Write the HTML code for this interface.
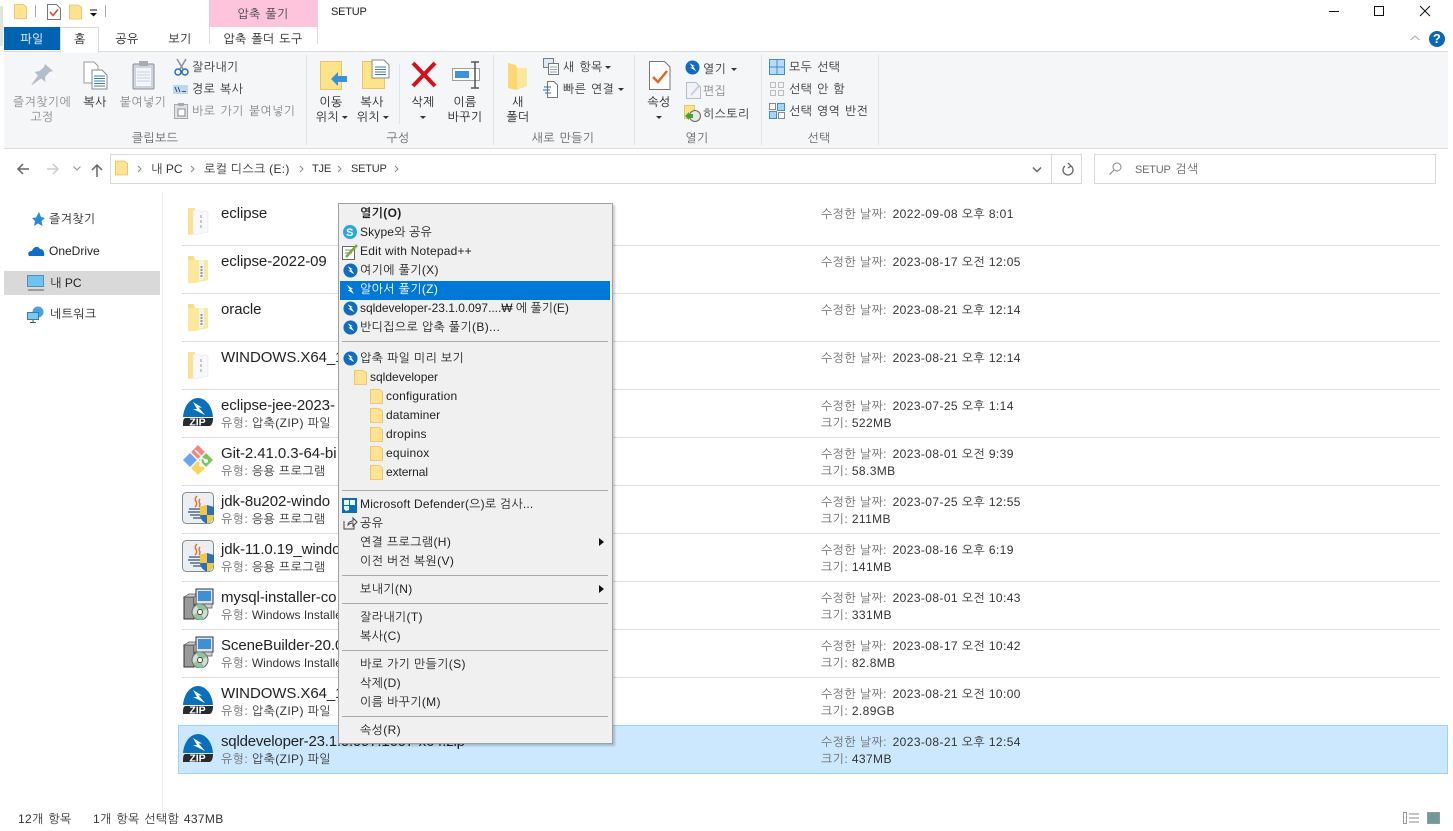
<!DOCTYPE html>
<html lang="ko"><head><meta charset="utf-8"><title>SETUP</title>
<style>
html,body{margin:0;padding:0;width:1453px;height:831px;overflow:hidden;background:#fff}
body{position:relative;font:12px/16px "Liberation Sans","NanumGothic","Noto Sans CJK KR",sans-serif;color:#222;letter-spacing:.35px;word-spacing:1px}
.t{position:absolute;white-space:nowrap;line-height:16px;margin-top:1px}
.c{transform:translateX(-50%);text-align:center}
.g{color:#8a8a8a}
.d{color:#666}
.r{position:absolute}
.n{font-size:15px;color:#222;letter-spacing:-.07px;word-spacing:0;margin-top:1px}
.s{color:#6d6d6d;letter-spacing:.4px;word-spacing:0;margin-top:0}
.s b{font-weight:normal;color:#333}
.q b{margin-left:2px}
.w b{letter-spacing:0}
.l{font-size:11px;letter-spacing:-.2px}
svg{position:absolute;overflow:visible}
.m{position:absolute;left:360px;white-space:nowrap;line-height:16px;color:#222;word-spacing:0}
.sep{position:absolute;left:342px;width:266px;height:1px;background:#a8a8a8}
.a{display:inline-block;width:0;height:0;border:3px solid transparent;border-top:3px solid #333;border-bottom:0;vertical-align:2px;margin-left:2px}
</style></head><body>
<svg width="0" height="0" style="position:absolute">
<defs>
<symbol id="f" viewBox="0 0 14 16"><path d="M.5.5H10L13.500 3V15.500H.5Z" fill="#ffe393" stroke="#e8c56a"/></symbol>
<symbol id="b" viewBox="0 0 16 16"><circle cx="8" cy="8" r="7.500" fill="#0f6cc0"/><path d="M5 3.500 10.500 6.500H8.500L12 12 5.500 8H8Z" fill="#fff"/></symbol>
<symbol id="zip" viewBox="0 0 30 31"><path d="M0 20C1 8 8 1 15 1S29 8 30 20Z" fill="#0b6fba"/><path d="M10 5 19 10.500H15.500L22 18 10 12H14Z" fill="#fff"/><path d="M2 21H30C30 25 29 29 26 29H0C0 25 0 22 2 21Z" fill="#2b2b2b"/><text x="14.500" y="28.500" font-family="Liberation Sans" font-weight="bold" font-size="10.500" letter-spacing="0" fill="#fff" text-anchor="middle">ZIP</text></symbol>
<symbol id="jv" viewBox="0 0 32 32"><rect x=".5" y=".5" width="31" height="31" rx="4" fill="#eceef2" stroke="#7f8a9a"/><path d="M15 4C10 9 18 10 13 15M18 7C15 10 20 11 17 15" fill="none" stroke="#e0762a" stroke-width="1.500"/><path d="M7 17H19M6 20H18M8 23H18M11 26H20" stroke="#4a6f90" stroke-width="1.500"/><path d="M18 15 25 13 32 15V23C32 28 27 31 25 32 23 31 18 28 18 23Z" fill="#2c6fc0"/><path d="M25 13V23H18V15ZM25 23H32C32 28 27 31 25 32Z" fill="#f8c933"/></symbol>
<symbol id="ms" viewBox="0 0 31 32"><rect x="1" y="9" width="10" height="22" fill="#9a9a9a" stroke="#333"/><path d="M1 9 6 6H15L11 9Z" fill="#ccc" stroke="#555" stroke-width=".7"/><rect x="13" y="1" width="17" height="15" fill="#dfe6ef" stroke="#333"/><rect x="15" y="3" width="13" height="10" fill="#3d8fd8"/><path d="M12 16H29V20H12Z" fill="#cfcfcf" stroke="#555" stroke-width=".7"/><circle cx="17" cy="24" r="8" fill="#cde0d0" stroke="#666"/><path d="M17 24 13 17A8 8 0 0 1 24 21ZM17 24 21 31A8 8 0 0 1 10 27Z" fill="#8fc49a"/><circle cx="17" cy="24" r="2.500" fill="#fff" stroke="#444"/></symbol>
<symbol id="fo" viewBox="0 0 22 29"><path d="M1 1 7 1 8 5H21V25L8 28H1Z" fill="#fbdc84"/><path d="M1 5H21V25L8 28H1Z" fill="#fde79b"/><path d="M12 5H17V24L12 26Z" fill="#f2f2ec"/><path d="M14.500 11V23" stroke="#7d9db8" stroke-width="2" stroke-dasharray="2 1"/></symbol>
<symbol id="fw" viewBox="0 0 22 29"><path d="M1 1 8 1V27L1 28Z" fill="#fde08a"/><path d="M6 3 21 5V25L6 28Z" fill="#f8f8f8" stroke="#e6e6e6" stroke-width=".6"/><path d="M14 8V22" stroke="#b4b8c4" stroke-width="1.500" stroke-dasharray="3 2"/></symbol>
</defs></svg>

<div class="r" style="left:0;top:6px;width:3px;height:40px;background:#dfe6dc"></div>

<!-- title bar -->
<svg style="left:14px;top:4px" width="13" height="15"><use href="#f" width="13" height="15"/></svg>
<div class="r" style="left:35px;top:5px;width:1px;height:12px;background:#aaa"></div>
<svg style="left:47px;top:4px" width="14" height="16"><path d="M.5.500H9.500L13.500 4.500V15.500H.5Z" fill="#fff" stroke="#777"/><path d="M3 8 6 11.500 11 5.500" fill="none" stroke="#d9472b" stroke-width="1.500"/></svg>
<svg style="left:69px;top:4px" width="13" height="16"><use href="#f" width="13" height="16"/></svg>
<svg style="left:90px;top:10px" width="8" height="7"><path d="M0 0H7" stroke="#111"/><path d="M0 3H7L3.500 6.500Z" fill="#111"/></svg>
<div class="r" style="left:105px;top:5px;width:1px;height:12px;background:#aaa"></div>
<div class="r" style="left:209px;top:0;width:109px;height:27px;background:#fdc4dc"></div>
<div class="t c d" style="left:263px;top:5px;color:#444">압축 풀기</div>
<div class="t l" style="left:331px;top:3px;color:#222">SETUP</div>
<svg style="left:1325px;top:4px" width="110" height="16"><path d="M4 7.500H14" stroke="#111"/><rect x="49.500" y="2.500" width="9" height="9" fill="none" stroke="#111"/><path d="M95 2 105 12M105 2 95 12" stroke="#111"/></svg>

<!-- tabs -->
<div class="r" style="left:4px;top:27px;width:56px;height:23px;background:#0063b1"></div>
<div class="t c" style="left:32px;top:30px;color:#fff">파일</div>
<div class="r" style="left:60px;top:27px;width:39px;height:25px;background:#fff;border:1px solid #dadbdc;border-bottom:none;box-sizing:border-box;z-index:2"></div>
<div class="t c" style="left:80px;top:30px;z-index:3">홈</div>
<div class="t c" style="left:127px;top:30px">공유</div>
<div class="t c" style="left:180px;top:30px">보기</div>
<div class="r" style="left:209px;top:27px;width:1px;height:17px;background:#dadbdc"></div>
<div class="r" style="left:317px;top:27px;width:1px;height:17px;background:#dadbdc"></div>
<div class="t c" style="left:263px;top:30px">압축 폴더 도구</div>
<svg style="left:1410px;top:35px" width="10" height="6"><path d="M.5 5 5 1 9.500 5" fill="none" stroke="#aaa"/></svg>
<div class="r" style="left:1429px;top:31px;width:16px;height:16px;border-radius:50%;background:#0a66b8"></div>
<div class="t c" style="left:1437px;top:30px;color:#fff;font-weight:bold;font-size:13px">?</div>

<!-- ribbon -->
<div class="r" style="left:4px;top:51px;width:1444px;height:98px;background:#f5f6f7;border-top:1px solid #dadbdc;border-bottom:1px solid #dadbdc;box-sizing:border-box"></div>
<div class="r" style="left:60px;top:50px;width:39px;height:3px;background:#fff;z-index:2;border-left:1px solid #dadbdc;border-right:1px solid #dadbdc;box-sizing:border-box"></div>
<div class="r" style="left:306px;top:55px;width:1px;height:90px;background:#e2e3e4"></div>
<div class="r" style="left:493px;top:55px;width:1px;height:90px;background:#e2e3e4"></div>
<div class="r" style="left:634px;top:55px;width:1px;height:90px;background:#e2e3e4"></div>
<div class="r" style="left:761px;top:55px;width:1px;height:90px;background:#e2e3e4"></div>
<div class="r" style="left:878px;top:55px;width:1px;height:90px;background:#e2e3e4"></div>
<div class="r" style="left:399px;top:64px;width:1px;height:60px;background:#e2e3e4"></div>

<!-- clipboard -->
<svg style="left:31px;top:64px" width="23" height="22"><path d="M14 0 22 7 18.500 8 14 13 14.500 18 10 14.500 1 21 .5 20.500 7 11.500 3.500 8 8.500 7 13 3Z" fill="#b4bdca"/></svg>
<div class="t c g" style="left:42px;top:93px">즐겨찾기에</div>
<div class="t c g" style="left:42px;top:108px">고정</div>
<svg style="left:83px;top:61px" width="25" height="29"><path d="M1 1H11L15 5V22H1Z" fill="#fff" stroke="#9a9a9a"/><path d="M9 9H19L24 14V28H9Z" fill="#fff" stroke="#8a8a8a"/><path d="M11 15H22M11 17.500H22M11 20H22M11 22.500H22M11 25H22" stroke="#3f78b8"/></svg>
<div class="t c" style="left:95px;top:93px">복사</div>
<svg style="left:132px;top:60px" width="23" height="30"><rect x="1" y="4" width="21" height="25" rx="1" fill="#cdd4df" stroke="#8a8f98"/><rect x="4" y="8" width="15" height="18" fill="#f2f5fa"/><rect x="7" y="1" width="9" height="5" fill="#a8acb2"/><path d="M5 12H18M5 15H18M5 18H18M5 21H18" stroke="#c6d1e4"/></svg>
<div class="t c g" style="left:143px;top:93px">붙여넣기</div>
<svg style="left:174px;top:58px" width="15" height="18"><path d="M3 1 9 11M12 1 6 11" stroke="#8a8f98" stroke-width="1.500"/><circle cx="4" cy="14" r="3" fill="none" stroke="#2b6fb5" stroke-width="1.500"/><circle cx="11" cy="14" r="3" fill="none" stroke="#2b6fb5" stroke-width="1.500"/></svg>
<div class="t" style="left:192px;top:58px;color:#333">잘라내기</div>
<svg style="left:173px;top:85px" width="15" height="9"><rect width="15" height="9" fill="#bcd8f0"/><path d="M2 2 4 7M5 2 7 7M9 6.500H13" stroke="#234" stroke-width=".8"/></svg>
<div class="t" style="left:192px;top:80px;color:#333">경로 복사</div>
<svg style="left:174px;top:103px" width="14" height="16"><rect x=".5" y="1.500" width="13" height="14" fill="#dfe3e8" stroke="#a5a9af"/><rect x="4" y="0" width="6" height="3" fill="#a5a9af"/><rect x="4" y="6" width="7" height="7" fill="#fff" stroke="#888"/></svg>
<div class="t g" style="left:192px;top:102px;word-spacing:1.500px">바로 가기 붙여넣기</div>
<div class="t c d" style="left:155px;top:129px">클립보드</div>

<!-- organize -->
<svg style="left:320px;top:61px" width="29" height="29"><rect x=".5" y=".5" width="21" height="28" fill="#fde38a" stroke="#e8c566"/><path d="M27 15H18V11L11 18 18 25V21H27Z" fill="#3c8fd9"/></svg>
<div class="t c" style="left:331px;top:93px">이동</div>
<div class="t c" style="left:332px;top:108px">위치<span class="a" style="margin-left:3px"></span></div>
<svg style="left:362px;top:59px" width="28" height="31"><rect x=".5" y="2.500" width="22" height="27" fill="#fde38a" stroke="#e8c566"/><path d="M10 1H22L27 6V19H10Z" fill="#fff" stroke="#8a8a8a"/><path d="M13 8H24M13 10.500H24M13 13H24M13 15.500H24" stroke="#3f78b8"/></svg>
<div class="t c" style="left:372px;top:93px">복사</div>
<div class="t c" style="left:373px;top:108px">위치<span class="a" style="margin-left:3px"></span></div>
<svg style="left:411px;top:61px" width="26" height="27"><path d="M2 2 24 25M24 2 2 25" stroke="#d5121b" stroke-width="4"/></svg>
<div class="t c" style="left:423px;top:93px">삭제</div>
<div class="t c" style="left:423px;top:108px"><span class="a" style="margin:0"></span></div>
<svg style="left:452px;top:61px" width="29" height="28"><rect x=".5" y="7.500" width="27" height="12" fill="#fff" stroke="#9a9fa6"/><rect x="3" y="10" width="14" height="7" fill="#3c93e0"/><path d="M19 1H27M23 1V27M19 27H27" stroke="#555" stroke-width="1.500" fill="none"/></svg>
<div class="t c" style="left:465px;top:93px">이름</div>
<div class="t c" style="left:465px;top:108px">바꾸기</div>
<div class="t c d" style="left:398px;top:129px">구성</div>

<!-- new -->
<svg style="left:507px;top:62px" width="21" height="28"><path d="M1 1 9 3 10 6H20V24L9 28 1 26Z" fill="#fbd872"/><path d="M10 6H20V24L10 27Z" fill="#fde79b"/></svg>
<div class="t c" style="left:518px;top:93px">새</div>
<div class="t c" style="left:518px;top:108px">폴더</div>
<svg style="left:543px;top:58px" width="16" height="17"><rect x=".5" y=".5" width="10" height="9" fill="#dfe9f2" stroke="#6d7e8e"/><rect x="5.500" y="5.500" width="10" height="11" fill="#fff" stroke="#777"/><path d="M7 9H14M7 11.500H14M7 14H14" stroke="#8aa"/></svg>
<div class="t" style="left:563px;top:58px;color:#333">새 항목<span class="a" style="margin-left:2px"></span></div>
<svg style="left:543px;top:81px" width="16" height="17"><path d="M4.500.5H11L14.500 4V16.500H4.500Z" fill="#fff" stroke="#777"/><path d="M1 6H8M0 9H7M2 12H8" stroke="#1f6fbf"/></svg>
<div class="t" style="left:563px;top:80px;color:#333">빠른 연결<span class="a" style="margin-left:4px"></span></div>
<div class="t c d" style="left:563px;top:129px">새로 만들기</div>

<!-- open -->
<svg style="left:649px;top:61px" width="22" height="29"><path d="M.5.5H15.500L21 6V28.500H.5Z" fill="#fff" stroke="#777"/><path d="M4 16 9 21 18 10" fill="none" stroke="#e0682a" stroke-width="2.500"/></svg>
<div class="t c" style="left:659px;top:93px">속성</div>
<div class="t c" style="left:659px;top:108px"><span class="a" style="margin:0"></span></div>
<svg style="left:685px;top:60px" width="15" height="15"><use href="#b" width="15" height="15"/></svg>
<div class="t" style="left:703px;top:60px;color:#333">열기<span class="a" style="margin-left:5px"></span></div>
<svg style="left:686px;top:82px" width="15" height="17"><path d="M.5.5H10L14.500 5V16.500H.5Z" fill="#f0f3f8" stroke="#b5bcc6"/><path d="M5 13 13 4" stroke="#c6cfdb" stroke-width="2"/></svg>
<div class="t g" style="left:703px;top:82px">편집</div>
<svg style="left:684px;top:105px" width="17" height="17"><rect x=".5" y=".5" width="10" height="13" fill="#fde38a" stroke="#e8c566"/><circle cx="11" cy="11" r="5.500" fill="#e8e8e8" stroke="#666"/><path d="M1 11 5 7V9H9V13H5V15Z" fill="#3aa63a"/></svg>
<div class="t" style="left:703px;top:105px;color:#333">히스토리</div>
<div class="t c d" style="left:697px;top:129px">열기</div>

<!-- select -->
<svg style="left:769px;top:59px" width="16" height="16"><rect x=".5" y=".5" width="15" height="15" fill="#b9dcf5" stroke="#3d8fd0"/><path d="M8 0V16M0 8H16" stroke="#3d8fd0"/></svg>
<div class="t" style="left:789px;top:58px;color:#333">모두 선택</div>
<svg style="left:770px;top:82px" width="15" height="15" fill="none" stroke="#bdbdbd"><rect x=".5" y=".5" width="5" height="5"/><rect x="8.500" y=".5" width="5" height="5"/><rect x=".5" y="8.500" width="5" height="5"/><rect x="8.500" y="8.500" width="5" height="5"/></svg>
<div class="t" style="left:789px;top:80px;color:#333">선택 안 함</div>
<svg style="left:769px;top:103px" width="16" height="16"><rect x=".5" y=".5" width="6" height="6" fill="#fff" stroke="#8a8a8a"/><rect x="8.500" y=".5" width="7" height="7" fill="#a9d3f2" stroke="#3d8fd0"/><rect x=".5" y="8.500" width="7" height="7" fill="#a9d3f2" stroke="#3d8fd0"/><rect x="9.500" y="9.500" width="6" height="6" fill="#fff" stroke="#8a8a8a"/></svg>
<div class="t" style="left:789px;top:102px;color:#333">선택 영역 반전</div>
<div class="t c d" style="left:819px;top:129px">선택</div>

<!-- nav -->
<svg style="left:16px;top:162px" width="14" height="14"><path d="M13 7H2M7 2 2 7 7 12" fill="none" stroke="#666" stroke-width="1.500"/></svg>
<svg style="left:46px;top:162px" width="14" height="14"><path d="M1 7H12M7 2 12 7 7 12" fill="none" stroke="#ccc" stroke-width="1.500"/></svg>
<svg style="left:73px;top:166px" width="8" height="5"><path d="M.5.5 4 4 7.500.5" fill="none" stroke="#999" stroke-width="1.200"/></svg>
<svg style="left:90px;top:163px" width="14" height="14"><path d="M7 14V2M2 7 7 2 12 7" fill="none" stroke="#666" stroke-width="1.500"/></svg>
<div class="r" style="left:110px;top:154px;width:972px;height:30px;border:1px solid #d9d9d9;box-sizing:border-box"></div>
<div class="r" style="left:1051px;top:154px;width:1px;height:30px;background:#d9d9d9"></div>
<svg style="left:115px;top:160px" width="13" height="16"><use href="#f" width="13" height="16"/></svg>
<svg style="left:137px;top:165px" width="310" height="8" fill="none" stroke="#888"><path d="M1 1 4 4 1 7M54 1 57 4 54 7M163 1 166 4 163 7M201 1 204 4 201 7M258 1 261 4 258 7"/></svg>
<div class="t" style="left:151px;top:160px;color:#333;letter-spacing:.1px;word-spacing:0">내 PC</div>
<div class="t" style="left:204px;top:160px;color:#333;letter-spacing:.3px;word-spacing:0">로컬 디스크 (E:)</div>
<div class="t l" style="left:312px;top:160px;color:#333">TJE</div>
<div class="t l" style="left:351px;top:160px;color:#333">SETUP</div>
<svg style="left:1032px;top:167px" width="10" height="6"><path d="M1 .5 5 4.500 9 .5" fill="none" stroke="#666" stroke-width="1.500"/></svg>
<svg style="left:1062px;top:162px" width="12" height="14"><path d="M3 4A5 5 0 1 0 9 4M6 1 9 4 6 6" fill="none" stroke="#666" stroke-width="1.300"/></svg>
<div class="r" style="left:1094px;top:154px;width:342px;height:30px;border:1px solid #d9d9d9;box-sizing:border-box"></div>
<svg style="left:1109px;top:162px" width="13" height="13" fill="none" stroke="#888"><circle cx="8" cy="5" r="4"/><path d="M5 8 .5 12.500"/></svg>
<div class="t" style="left:1135px;top:160px;color:#6d6d6d"><span class="l">SETUP</span> 검색</div>

<!-- sidebar -->
<div class="r" style="left:162px;top:192px;width:1px;height:620px;background:#eee"></div>
<div class="r" style="left:4px;top:271px;width:156px;height:24px;background:#d9d9d9"></div>
<svg style="left:30px;top:212px" width="15" height="14"><path d="M9 0 11 5 15 6 11.500 9 12.500 14 8 11.500 4 14 5 9 2 6 6 5.500Z" fill="#2a8ad4"/></svg>
<div class="t" style="left:49px;top:210px">즐겨찾기</div>
<svg style="left:28px;top:245px" width="17" height="12"><path d="M1 11C-1 8 1 6 4 6 5 2 10 0 12 4 15 4 17 7 16 11Z" fill="#0f6fc6"/></svg>
<div class="t" style="left:49px;top:242px;letter-spacing:0">OneDrive</div>
<svg style="left:27px;top:275px" width="18" height="17"><rect x=".5" y=".5" width="16" height="11" fill="#6cc4f0" stroke="#5a8fb5"/><path d="M1 15H17" stroke="#888" stroke-width="1.500"/></svg>
<div class="t" style="left:50px;top:274px;letter-spacing:.1px;word-spacing:0">내 PC</div>
<svg style="left:27px;top:306px" width="18" height="17"><circle cx="11" cy="6" r="5.500" fill="#4aa3dd"/><rect x=".5" y="6.500" width="11" height="7" fill="#7cc8f0" stroke="#3a78a8"/><path d="M6 14V16M3 16.500H9" stroke="#555"/></svg>
<div class="t" style="left:50px;top:305px">네트워크</div>

<!-- rows -->
<div class="r" style="left:182px;top:245px;width:1258px;height:1px;background:#dcdcdc"></div>
<div class="r" style="left:182px;top:293px;width:1258px;height:1px;background:#dcdcdc"></div>
<div class="r" style="left:182px;top:341px;width:1258px;height:1px;background:#dcdcdc"></div>
<div class="r" style="left:182px;top:389px;width:1258px;height:1px;background:#dcdcdc"></div>
<div class="r" style="left:182px;top:437px;width:1258px;height:1px;background:#dcdcdc"></div>
<div class="r" style="left:182px;top:485px;width:1258px;height:1px;background:#dcdcdc"></div>
<div class="r" style="left:182px;top:533px;width:1258px;height:1px;background:#dcdcdc"></div>
<div class="r" style="left:182px;top:581px;width:1258px;height:1px;background:#dcdcdc"></div>
<div class="r" style="left:182px;top:629px;width:1258px;height:1px;background:#dcdcdc"></div>
<div class="r" style="left:182px;top:677px;width:1258px;height:1px;background:#dcdcdc"></div>
<div class="r" style="left:178px;top:725px;width:1270px;height:49px;background:#cce8ff;border:1px solid #99d1ff;box-sizing:border-box"></div>

<svg style="left:187px;top:207px" width="22" height="29"><use href="#fw" width="22" height="29"/></svg>
<div class="t n" style="left:221px;top:205px">eclipse</div>
<div class="t s q" style="left:821px;top:206px">수정한 날짜: <b>2022-09-08 오후 8:01</b></div>

<svg style="left:187px;top:255px" width="22" height="29"><use href="#fo" width="22" height="29"/></svg>
<div class="t n" style="left:221px;top:253px">eclipse-2022-09</div>
<div class="t s q" style="left:821px;top:254px">수정한 날짜: <b>2023-08-17 오전 12:05</b></div>

<svg style="left:187px;top:303px" width="22" height="29"><use href="#fo" width="22" height="29"/></svg>
<div class="t n" style="left:221px;top:301px">oracle</div>
<div class="t s q" style="left:821px;top:302px">수정한 날짜: <b>2023-08-21 오후 12:14</b></div>

<svg style="left:187px;top:351px" width="22" height="29"><use href="#fw" width="22" height="29"/></svg>
<div class="t n" style="left:221px;top:349px">WINDOWS.X64_1</div>
<div class="t s q" style="left:821px;top:350px">수정한 날짜: <b>2023-08-21 오후 12:14</b></div>

<svg style="left:183px;top:397px" width="30" height="31"><use href="#zip" width="30" height="31"/></svg>
<div class="t n" style="left:221px;top:397px">eclipse-jee-2023-</div>
<div class="t s" style="left:221px;top:415px">유형: <b>압축(ZIP) 파일</b></div>
<div class="t s q" style="left:821px;top:398px">수정한 날짜: <b>2023-07-25 오후 1:14</b></div>
<div class="t s" style="left:821px;top:415px">크기: <b>522MB</b></div>

<svg style="left:182px;top:444px" width="32" height="32"><path d="M16 1 23 8 16 15 9 8Z" fill="#f08a80"/><path d="M24 9 31 16 24 23 17 16Z" fill="#7cc563"/><path d="M16 17 23 24 16 31 9 24Z" fill="#f9d65e"/><path d="M8 9 15 16 8 23 1 16Z" fill="#6aa5ee"/><path d="M13 6 19 12V20M19 13 24 17" fill="none" stroke="#f5f5f5" stroke-width="1.500"/><circle cx="19" cy="21" r="2" fill="#f5f5f5"/><circle cx="24" cy="17" r="2" fill="#f5f5f5"/></svg>
<div class="t n" style="left:221px;top:445px">Git-2.41.0.3-64-bi</div>
<div class="t s" style="left:221px;top:463px">유형: <b>응용 프로그램</b></div>
<div class="t s q" style="left:821px;top:446px">수정한 날짜: <b>2023-08-01 오전 9:39</b></div>
<div class="t s" style="left:821px;top:463px">크기: <b>58.3MB</b></div>

<svg style="left:182px;top:492px" width="32" height="32"><use href="#jv" width="32" height="32"/></svg>
<div class="t n" style="left:221px;top:493px">jdk-8u202-windo</div>
<div class="t s" style="left:221px;top:511px">유형: <b>응용 프로그램</b></div>
<div class="t s q" style="left:821px;top:494px">수정한 날짜: <b>2023-07-25 오후 12:55</b></div>
<div class="t s" style="left:821px;top:511px">크기: <b>211MB</b></div>

<svg style="left:182px;top:540px" width="32" height="32"><use href="#jv" width="32" height="32"/></svg>
<div class="t n" style="left:221px;top:541px">jdk-11.0.19_windo</div>
<div class="t s" style="left:221px;top:559px">유형: <b>응용 프로그램</b></div>
<div class="t s q" style="left:821px;top:542px">수정한 날짜: <b>2023-08-16 오후 6:19</b></div>
<div class="t s" style="left:821px;top:559px">크기: <b>141MB</b></div>

<svg style="left:183px;top:588px" width="31" height="32"><use href="#ms" width="31" height="32"/></svg>
<div class="t n" style="left:221px;top:589px">mysql-installer-co</div>
<div class="t s w" style="left:221px;top:607px">유형: <b>Windows Installer</b></div>
<div class="t s q" style="left:821px;top:590px">수정한 날짜: <b>2023-08-01 오전 10:43</b></div>
<div class="t s" style="left:821px;top:607px">크기: <b>331MB</b></div>

<svg style="left:183px;top:636px" width="31" height="32"><use href="#ms" width="31" height="32"/></svg>
<div class="t n" style="left:221px;top:637px">SceneBuilder-20.0</div>
<div class="t s w" style="left:221px;top:655px">유형: <b>Windows Installer</b></div>
<div class="t s q" style="left:821px;top:638px">수정한 날짜: <b>2023-08-17 오전 10:42</b></div>
<div class="t s" style="left:821px;top:655px">크기: <b>82.8MB</b></div>

<svg style="left:183px;top:685px" width="30" height="31"><use href="#zip" width="30" height="31"/></svg>
<div class="t n" style="left:221px;top:685px">WINDOWS.X64_1</div>
<div class="t s" style="left:221px;top:703px">유형: <b>압축(ZIP) 파일</b></div>
<div class="t s q" style="left:821px;top:686px">수정한 날짜: <b>2023-08-21 오전 10:00</b></div>
<div class="t s" style="left:821px;top:703px">크기: <b>2.89GB</b></div>

<svg style="left:183px;top:733px" width="30" height="31"><use href="#zip" width="30" height="31"/></svg>
<div class="t n" style="left:221px;top:733px;letter-spacing:-.2px">sqldeveloper-23.1.0.097.1607-x64.zip</div>
<div class="t s" style="left:221px;top:751px">유형: <b>압축(ZIP) 파일</b></div>
<div class="t s q" style="left:821px;top:734px">수정한 날짜: <b>2023-08-21 오후 12:54</b></div>
<div class="t s" style="left:821px;top:751px">크기: <b>437MB</b></div>

<!-- status -->
<div class="t" style="left:18px;top:810px;color:#333">12개 항목</div>
<div class="t" style="left:93px;top:810px;color:#333">1개 항목 선택함 437MB</div>
<svg style="left:1403px;top:812px" width="37" height="13"><rect x=".5" y=".5" width="3" height="11" fill="none" stroke="#999"/><path d="M6 2H16M6 6H16M6 10H16" stroke="#888"/><rect x="24.500" y=".5" width="12" height="11" fill="#6f9a9a" stroke="#999"/></svg>

<!-- context menu -->
<div class="r" style="left:338px;top:203px;width:275px;height:541px;background:#f0f0f0;border:1px solid #a0a0a0;box-sizing:border-box;box-shadow:2px 2px 2px rgba(0,0,0,.2);z-index:5"></div>
<div style="position:absolute;left:0;top:0;z-index:6">
<div class="r" style="left:340px;top:281px;width:270px;height:19px;background:#0078d7"></div>
<div class="m" style="top:205px;font-weight:bold">열기(O)</div>
<svg style="left:343px;top:225px" width="14" height="14"><circle cx="7" cy="7" r="7" fill="#2aa5e6"/><text x="7" y="11" font-size="11" font-family="Liberation Sans" font-weight="bold" fill="#fff" text-anchor="middle">S</text></svg>
<div class="m" style="top:224px;letter-spacing:.15px">Skype와 공유</div>
<svg style="left:342px;top:244px" width="16" height="16"><rect x=".5" y="2.500" width="12" height="13" fill="#fff" stroke="#666"/><path d="M3 6H10M3 9H10" stroke="#888"/><path d="M4 13 15 1" stroke="#7ba83c" stroke-width="2.500"/></svg>
<div class="m" style="top:243px;letter-spacing:.2px">Edit with Notepad++</div>
<svg style="left:343px;top:263px" width="15" height="15"><use href="#b" width="15" height="15"/></svg>
<div class="m" style="top:262px">여기에 풀기(X)</div>
<svg style="left:345px;top:284px" width="10" height="12"><path d="M2 1 8 5H6L9 10 2.500 6H5Z" fill="#fff"/></svg>
<div class="m" style="top:281px;color:#fff">알아서 풀기(Z)</div>
<svg style="left:343px;top:301px" width="15" height="15"><use href="#b" width="15" height="15"/></svg>
<div class="m" style="top:300px;letter-spacing:-.03px">sqldeveloper-23.1.0.097....₩ 에 풀기(E)</div>
<svg style="left:343px;top:320px" width="15" height="15"><use href="#b" width="15" height="15"/></svg>
<div class="m" style="top:319px">반디집으로 압축 풀기(B)...</div>
<div class="sep" style="top:341px"></div>
<svg style="left:343px;top:351px" width="15" height="15"><use href="#b" width="15" height="15"/></svg>
<div class="m" style="top:350px">압축 파일 미리 보기</div>
<svg style="left:354px;top:370px" width="13" height="15"><use href="#f" width="13" height="15"/></svg>
<div class="m" style="top:369px;left:370px;letter-spacing:0">sqldeveloper</div>
<svg style="left:370px;top:389px" width="13" height="15"><use href="#f" width="13" height="15"/></svg>
<div class="m" style="top:388px;left:386px;letter-spacing:.2px">configuration</div>
<svg style="left:370px;top:408px" width="13" height="15"><use href="#f" width="13" height="15"/></svg>
<div class="m" style="top:407px;left:386px;letter-spacing:.1px">dataminer</div>
<svg style="left:370px;top:427px" width="13" height="15"><use href="#f" width="13" height="15"/></svg>
<div class="m" style="top:426px;left:386px;letter-spacing:.2px">dropins</div>
<svg style="left:370px;top:446px" width="13" height="15"><use href="#f" width="13" height="15"/></svg>
<div class="m" style="top:445px;left:386px;letter-spacing:.2px">equinox</div>
<svg style="left:370px;top:465px" width="13" height="15"><use href="#f" width="13" height="15"/></svg>
<div class="m" style="top:464px;left:386px;letter-spacing:-.1px">external</div>
<div class="sep" style="top:490px"></div>
<svg style="left:342px;top:498px" width="15" height="15"><rect width="15" height="15" fill="#0f6cbd"/><path d="M2 2H7V7H2ZM8 2H13V7H8ZM2 8H7V12L4 13 2 11Z" fill="#dff"/></svg>
<div class="m" style="top:496px;letter-spacing:.2px">Microsoft Defender(으)로 검사...</div>
<svg style="left:343px;top:517px" width="14" height="13" fill="none" stroke="#444"><path d="M1 4V12H11V8M5 8C5 5 8 4 10 4V1L14 5 10 9V6C8 6 6 7 5 8Z"/></svg>
<div class="m" style="top:515px">공유</div>
<div class="m" style="top:534px">연결 프로그램(H)</div>
<svg style="left:599px;top:538px" width="5" height="8"><path d="M0 0 5 4 0 8Z" fill="#111"/></svg>
<div class="m" style="top:553px">이전 버전 복원(V)</div>
<div class="sep" style="top:575px"></div>
<div class="m" style="top:581px">보내기(N)</div>
<svg style="left:599px;top:585px" width="5" height="8"><path d="M0 0 5 4 0 8Z" fill="#111"/></svg>
<div class="sep" style="top:603px"></div>
<div class="m" style="top:609px">잘라내기(T)</div>
<div class="m" style="top:628px">복사(C)</div>
<div class="sep" style="top:650px"></div>
<div class="m" style="top:656px">바로 가기 만들기(S)</div>
<div class="m" style="top:675px">삭제(D)</div>
<div class="m" style="top:694px">이름 바꾸기(M)</div>
<div class="sep" style="top:716px"></div>
<div class="m" style="top:722px">속성(R)</div>
</div>
</body></html>
